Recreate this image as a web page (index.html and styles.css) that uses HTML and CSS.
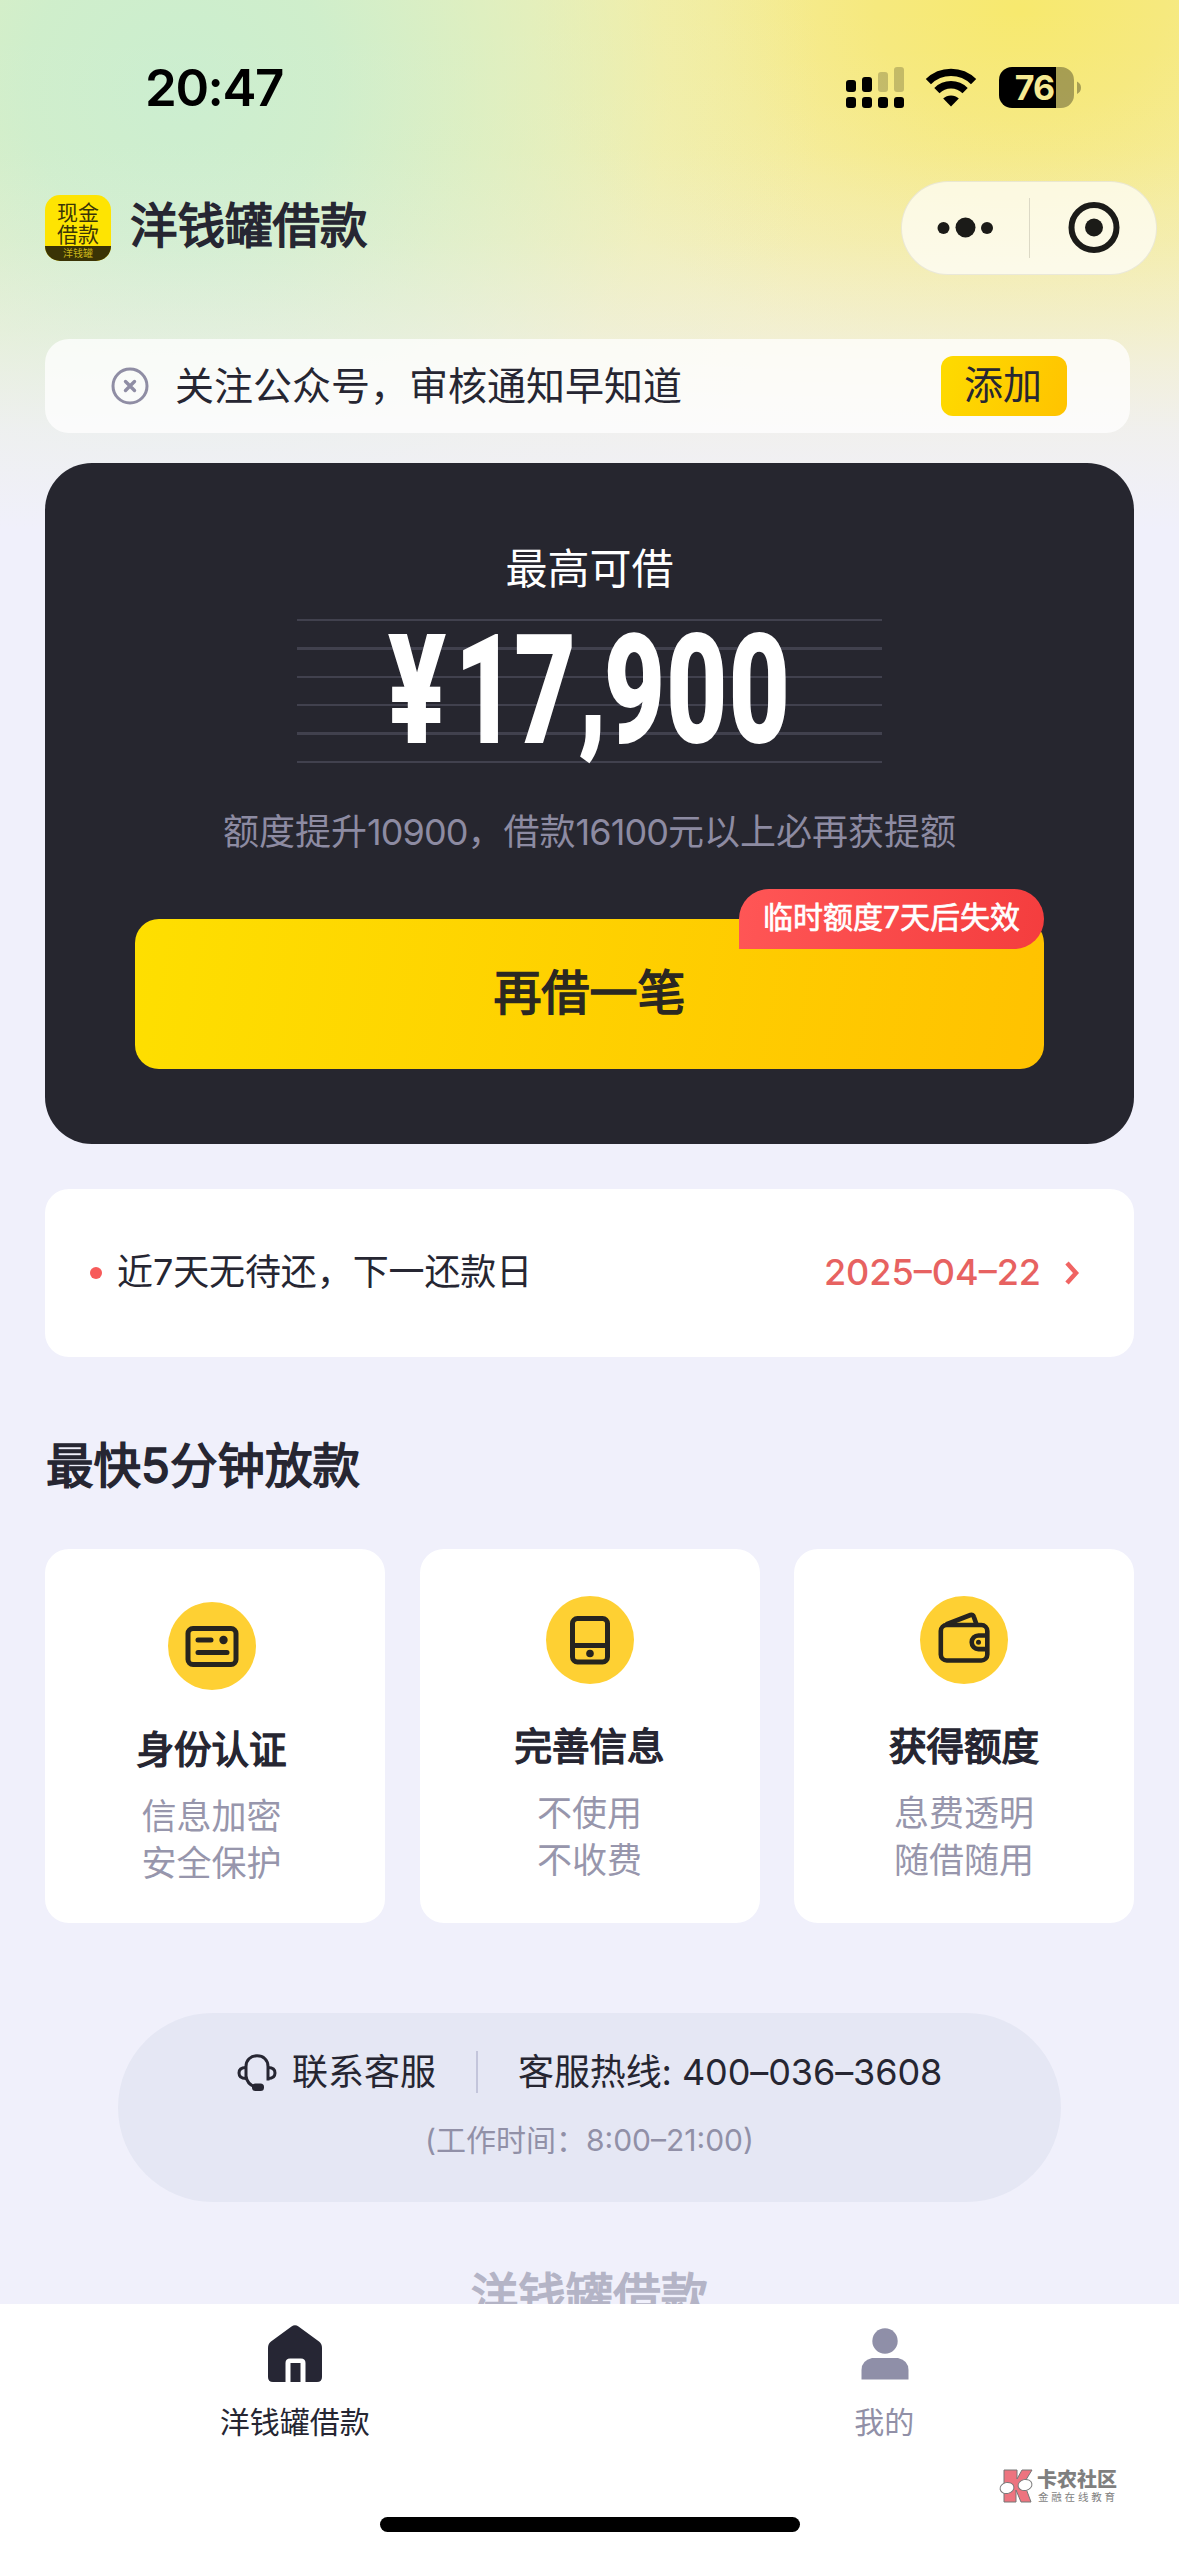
FILE: index.html
```html
<!DOCTYPE html>
<html lang="zh-CN">
<head>
<meta charset="utf-8">
<title>洋钱罐借款</title>
<link rel="stylesheet" href="styles.css">
</head>
<body>
<div class="screen">
  <header class="status">
    <span class="clock">20:47</span>
    <div class="status-icons">
      <svg width="58" height="42" viewBox="0 0 58 42">
        <g fill="#000">
          <rect x="0" y="13" width="10" height="12" rx="3"/><rect x="16" y="10" width="10" height="15" rx="3"/>
          <rect x="0" y="30" width="10" height="11" rx="3"/><rect x="16" y="30" width="10" height="11" rx="3"/>
          <rect x="32" y="30" width="10" height="11" rx="3"/><rect x="48" y="30" width="10" height="11" rx="3"/>
        </g>
        <g fill="#000" fill-opacity=".2"><rect x="32" y="5" width="10" height="20" rx="3"/><rect x="48" y="0" width="10" height="25" rx="3"/></g>
      </svg>
      <svg class="wifi" width="52" height="42" viewBox="0 0 52 42">
        <g fill="none" stroke="#000" stroke-width="7.4">
          <path d="M3.4 14.6a32.2 32.2 0 0 1 45.2 0"/>
          <path d="M11.9 23.6a20 20 0 0 1 28.2 0"/>
        </g>
        <path d="M26 39.5l-7.8-7.9a11.2 11.2 0 0 1 15.6 0z"/>
      </svg>
      <svg class="battery" width="83" height="42" viewBox="0 0 83 42">
        <path d="M13 0h44v41H13A13 13 0 0 1 0 28V13A13 13 0 0 1 13 0z"/>
        <path d="M57 0h5a13 13 0 0 1 13 13v15a13 13 0 0 1-13 13h-5zM78 14.500q4 2 4 6.200t-4 6.300z" fill-opacity=".32"/>
        <text class="battery-text" x="35.500" y="33" text-anchor="middle">76</text>
      </svg>
    </div>
  </header>

  <div class="nav">
    <div class="app-icon">
      <span class="app-line">现金</span>
      <span class="app-line app-line-low">借款</span>
      <span class="app-name">洋钱罐</span>
    </div>
    <h1 class="app-title">洋钱罐借款</h1>
    <div class="capsule">
      <svg width="256" height="94" viewBox="0 0 256 94">
        <g fill="#1b1b18"><circle cx="42.500" cy="47" r="6"/><circle cx="64.500" cy="46.500" r="10"/><circle cx="86" cy="47" r="6"/><circle cx="193" cy="46.500" r="9"/></g>
        <path d="M128.500 17v60" stroke="#dcd9c6" stroke-width="1"/>
        <circle cx="193" cy="46.500" r="22.500" fill="none" stroke="#1b1b18" stroke-width="6"/>
      </svg>
    </div>
  </div>

  <div class="notice">
    <svg width="38" height="38" viewBox="0 0 38 38" fill="none" stroke="#8f8da4" stroke-width="3">
      <circle cx="19" cy="19" r="17"/><path d="M14.500 14.500l9 9m0-9l-9 9" stroke-width="3.400" stroke-linecap="round"/>
    </svg>
    <span class="notice-text">关注公众号，审核通知早知道</span>
    <span class="notice-add">添加</span>
  </div>

  <main>
    <section class="loan">
      <div class="loan-label">最高可借</div>
      <div class="amount-box">
        <svg class="amount-art" width="585" height="144" viewBox="0 0 585 144">
          <g fill="#41414e">
            <rect y="0" width="585" height="2"/><rect y="28" width="585" height="3"/><rect y="57" width="585" height="2"/>
            <rect y="85" width="585" height="2"/><rect y="113" width="585" height="3"/><rect y="142" width="585" height="2"/>
          </g>
          <text class="amount" transform="translate(0 122.500) scale(.7 1)" y="0 0 0 -8 0 0 0" x="131 226 311 403 439 528 617">¥17,900</text>
        </svg>
      </div>
      <div class="loan-hint">额度提升<span class="num">10900</span>，借款<span class="num">16100</span>元以上必再获提额</div>
      <div class="borrow">再借一笔<span class="tag">临时额度7天后失效</span></div>
    </section>

    <section class="repay">
      <i class="dot"></i>
      <span class="repay-text">近7天无待还，下一还款日</span>
      <span class="repay-date">2025–04–22</span>
      <svg width="16" height="26" viewBox="0 0 16 26" fill="none" stroke="#f06463" stroke-width="4.500"><path d="M3 3l9 10-9 10"/></svg>
    </section>

    <h2 class="section-title">最快5分钟放款</h2>

    <section class="steps">
      <article class="step step-first">
        <svg width="88" height="88" viewBox="0 0 88 88" fill="none" stroke="#26241f" stroke-width="5" stroke-linecap="round">
          <circle cx="44" cy="44" r="44" fill="#fed033" stroke="none"/>
          <rect x="20" y="26.500" width="48" height="36" rx="5"/>
          <path d="M30 38h13M30 50.500h29"/><circle cx="55.500" cy="38" r="4.200" fill="#26241f" stroke="none"/>
        </svg>
        <h3 class="step-title">身份认证</h3>
        <p class="step-text">信息加密<br>安全保护</p>
      </article>
      <article class="step">
        <svg width="88" height="88" viewBox="0 0 88 88" fill="none" stroke="#26241f" stroke-width="5">
          <circle cx="44" cy="44" r="44" fill="#fed033" stroke="none"/>
          <rect x="26.500" y="22.500" width="35" height="43.500" rx="5"/>
          <path d="M27 49.500h35"/><circle cx="44" cy="57.500" r="3.800" fill="#26241f" stroke="none"/>
        </svg>
        <h3 class="step-title">完善信息</h3>
        <p class="step-text">不使用<br>不收费</p>
      </article>
      <article class="step">
        <svg width="88" height="88" viewBox="0 0 88 88" fill="none" stroke="#26241f" stroke-width="4.600" stroke-linejoin="round">
          <circle cx="44" cy="44" r="44" fill="#fed033" stroke="none"/>
          <rect x="20.800" y="29" width="46.500" height="35.500" rx="6"/>
          <path d="M26 28.500L50.500 19q2.500-.8 3.300 1.700l2.800 8"/>
          <path d="M67 39.500H58.500a6.800 6.800 0 0 0 0 13.600H67"/><circle cx="58.500" cy="46.300" r="2.500" fill="#26241f" stroke="none"/>
        </svg>
        <h3 class="step-title">获得额度</h3>
        <p class="step-text">息费透明<br>随借随用</p>
      </article>
    </section>

    <section class="contact">
      <div class="contact-row">
        <svg width="40" height="38" viewBox="0 0 40 38" fill="none" stroke="#262632" stroke-width="3">
          <path d="M9 25V12.500C9 6 13.500 1.800 20 1.800s11 4.200 11 10.700V25h1.500M9 22c.5 5 4 9 9 11"/>
          <path d="M9 13.500C4 13.500 2 15.500 2 19s2 5.500 7 5.500M31 13.500c5 0 7 2 7 5.500s-2 5.500-7 5.500"/>
          <rect x="15" y="29.500" width="12" height="7.500" rx="3.500" fill="#262632" stroke="none"/>
        </svg>
        <span class="service">联系客服</span>
        <i class="bar"></i>
        <span class="hotline">客服热线: 400–036–3608</span>
      </div>
      <div class="hours">(工作时间：8:00–21:00)</div>
    </section>

    <div class="brand">洋钱罐借款</div>
  </main>

  <footer class="tabbar">
    <div class="tabs">
      <div class="tab tab-active">
        <svg width="56" height="58" viewBox="0 0 56 58">
          <path fill="#262634" d="M24.500 1.500q3.500-2.500 7 0L52 16.500q3 2.400 3 6.500V52q0 5-5 5H38.500V38q0-4.500-4.500-4.500H23q-4.500 0-4.500 4.500V57H6q-5 0-5-5V23q0-4.100 3-6.500zM23.500 38h10v19h-10z"/>
        </svg>
        <span>洋钱罐借款</span>
      </div>
      <div class="tab">
        <svg width="56" height="58" viewBox="0 0 56 58" fill="#8f8fa8">
          <circle cx="29" cy="16" r="12.700"/><path d="M16 33h26q10.500 2.500 10.500 12v9.500h-47V45Q5.500 35.500 16 33z"/>
        </svg>
        <span>我的</span>
      </div>
    </div>
    <div class="home-indicator"></div>
  </footer>

  <div class="watermark">
    <svg width="35" height="36" viewBox="0 0 35 36">
      <path d="M5 2h13v9l5-9h10l-8 13 7 19H22l-5-12v12H5z" fill="#ed747f" stroke="#777" stroke-width="1"/>
      <ellipse cx="8" cy="20" rx="7" ry="5.500" fill="#fff" stroke="#777" stroke-width="1" transform="rotate(-12 8 20)"/>
      <ellipse cx="26" cy="17" rx="7" ry="5.500" fill="#fff" stroke="#777" stroke-width="1" transform="rotate(-12 26 17)"/>
    </svg>
    <div class="watermark-text"><b>卡农社区</b><span>金融在线教育</span></div>
  </div>
</div>
</body>
</html>
```
FILE: styles.css
```css
* { box-sizing: border-box; }
body, h1, h2, h3, p { margin: 0; }
body {
  width: 1179px;
  height: 2556px;
  overflow: hidden;
  background: #f0f0fb;
  color: #262632;
  font-family: Inter, "Noto Sans CJK SC", sans-serif;
}
svg { display: block; flex: none; }
.screen {
  position: relative;
  display: flex;
  flex-direction: column;
  height: 2556px;
  background:
    linear-gradient(180deg, rgba(240,240,251,0) 0, rgba(240,240,251,.03) 150px, rgba(240,240,251,.16) 240px, rgba(240,240,251,.42) 330px, rgba(240,240,251,.8) 430px, #f0f0fb 530px) 0 0 / 100% 530px no-repeat,
    radial-gradient(ellipse 640px 640px at 180px 90px, #cbeecf 0, rgba(205,238,204,.94) 24%, rgba(213,239,197,.7) 48%, rgba(230,240,184,.3) 76%, rgba(240,240,180,0) 100%) 0 0 / 100% 530px no-repeat,
    radial-gradient(ellipse 720px 540px at 1020px 10px, #f7e96e 0, #f6e97e 20%, #f5ec9a 42%, #f4efb2 68%, #f2efc0 100%) 0 0 / 100% 530px no-repeat,
    #f0f0fb;
}
.status {
  display: flex;
  justify-content: space-between;
  height: 181px;
  padding: 67px 97px 0 145px;
}
.clock { height: 42px; line-height: 42px; font-size: 51px; font-weight: 600; letter-spacing: -1.4px; color: #000; }
.status-icons { display: flex; }
.wifi { margin-left: 21px; }
.battery { margin-left: 22px; }
.battery-text { font: 700 34px Inter, sans-serif; letter-spacing: -1px; fill: #f6ea92; }
.nav { display: flex; align-items: center; height: 94px; padding: 0 22px 0 45px; }
.app-icon {
  display: flex;
  flex-direction: column;
  align-items: center;
  width: 66px;
  height: 66px;
  border-radius: 15px;
  overflow: hidden;
  background: #fee402;
  color: #3b3507;
}
.app-line { height: 22px; margin-top: 7px; line-height: 22px; font-size: 21px; }
.app-line-low { margin-top: 0; }
.app-name { width: 66px; height: 15px; line-height: 14px; text-align: center; background: #3a3305; color: #c9b41a; font-size: 10px; }
.app-title { margin: -4px 0 0 19px; font-size: 47.500px; line-height: 66px; font-weight: 400; -webkit-text-stroke: 1.600px; }
.capsule { width: 256px; height: 94px; margin-left: auto; border-radius: 47px; background: rgba(255,255,255,.7); box-shadow: inset 0 0 0 1px rgba(0,0,0,.07); }
.notice {
  display: flex;
  align-items: center;
  width: 1085px;
  height: 94px;
  margin: 64px 0 0 45px;
  padding: 0 63px 0 66px;
  border-radius: 24px;
  background: rgba(255,255,255,.75);
}
.notice-text { margin-left: 26px; font-size: 39px; line-height: 60px; }
.notice-add { width: 126px; height: 60px; margin-left: auto; padding-right: 2px; border-radius: 12px; background: linear-gradient(110deg, #fedb00, #ffc300); font-size: 39px; line-height: 58px; text-align: center; }
main { display: flex; flex-direction: column; height: 1871px; padding: 30px 45px 0; overflow: hidden; }
.loan { display: flex; flex: none; flex-direction: column; align-items: center; height: 681px; padding-top: 81px; border-radius: 47px; background: #26262f; }
.loan-label { height: 50px; line-height: 50px; color: #fff; font-size: 42px; }
.amount-box { margin-top: 25px; }
.amount-art { overflow: visible; }
.amount { font: 800 150px Roboto, sans-serif; fill: #fff; stroke: #fff; stroke-width: 2px; }
.loan-hint { height: 50px; margin-top: 44px; line-height: 50px; color: #8d8ba2; font-size: 36px; white-space: nowrap; }
.num { letter-spacing: -.9px; }
.borrow { position: relative; width: 909px; height: 150px; margin-top: 62px; border-radius: 24px; background: linear-gradient(100deg, #fedf00, #ffc200); color: #2b2822; font-size: 48px; line-height: 148px; -webkit-text-stroke: 1.600px; text-align: center; }
.tag { position: absolute; top: -30px; right: 0; width: 305px; height: 60px; border-radius: 30px 30px 30px 0; background: linear-gradient(100deg, #ff5656, #f43d3e); color: #fff; font-size: 30px; line-height: 57px; -webkit-text-stroke: .700px; }
.repay { display: flex; flex: none; align-items: center; height: 168px; margin-top: 45px; padding: 0 54px 0 45px; border-radius: 24px; background: #fff; }
.dot { width: 12px; height: 12px; border-radius: 50%; background: #f75b5a; }
.repay-text { margin: -2px 0 0 15px; font-size: 36px; line-height: 50px; letter-spacing: -.1px; }
.repay-date { margin: -2px 23px 0 auto; color: #e76261; font-size: 36px; line-height: 50px; font-weight: 500; }
.section-title { height: 60px; margin-top: 79px; line-height: 60px; padding-left: 1px; font-size: 47.500px; font-weight: 400; -webkit-text-stroke: 1.600px; }
.steps { display: flex; flex: none; justify-content: space-between; margin-top: 53px; }
.step { display: flex; flex-direction: column; align-items: center; width: 340px; height: 374px; padding-top: 47px; border-radius: 24px; background: #fff; }
.step-first { padding: 53px 7px 0 0; }
.step-title { height: 50px; margin-top: 38px; line-height: 50px; font-size: 37.500px; font-weight: 400; -webkit-text-stroke: 1.500px; }
.step-first .step-title { margin-top: 35px; }
.step-text { margin-top: 18px; line-height: 47px; color: #9796ac; font-size: 35px; text-align: center; }
.contact { flex: none; width: 943px; height: 189px; margin: 90px auto 0; padding-top: 34px; border-radius: 95px; background: #e5e7f4; }
.contact-row { display: flex; align-items: center; height: 50px; padding-left: 119px; font-size: 36px; line-height: 50px; white-space: nowrap; }
.contact-row svg { margin-top: 2px; }
.service { margin: -1px 0 0 15px; }
.bar { width: 2px; height: 42px; margin: 0 40px; background: #c3c5db; }
.hotline { margin-top: -1px; letter-spacing: -.1px; }
.hours { height: 40px; margin-top: 23px; line-height: 40px; text-align: center; color: #9190a7; font-size: 30px; }
.brand { flex: none; margin-top: 61px; line-height: 66px; text-align: center; color: #b4b4c6; font-size: 47.500px; -webkit-text-stroke: 1.600px; }
.tabbar { display: flex; flex-direction: column; align-items: center; height: 252px; background: #fff; }
.tabs { display: flex; width: 100%; height: 213px; }
.tab { display: flex; flex: 1; flex-direction: column; align-items: center; padding-top: 21px; font-size: 30px; color: #9190a7; }
.tab span { margin-top: 19px; line-height: 40px; }
.tab-active { color: #262632; }
.home-indicator { width: 420px; height: 15px; border-radius: 8px; background: #000; }
.watermark { position: absolute; left: 999px; top: 2468px; display: flex; color: #7f7f7f; }
.watermark-text { display: flex; flex-direction: column; margin-left: 3px; padding-top: 1px; }
.watermark-text b { font-size: 20px; line-height: 22px; font-weight: 900; }
.watermark-text span { margin-left: 1px; font-size: 10.500px; line-height: 14px; letter-spacing: 2.800px; }
```
